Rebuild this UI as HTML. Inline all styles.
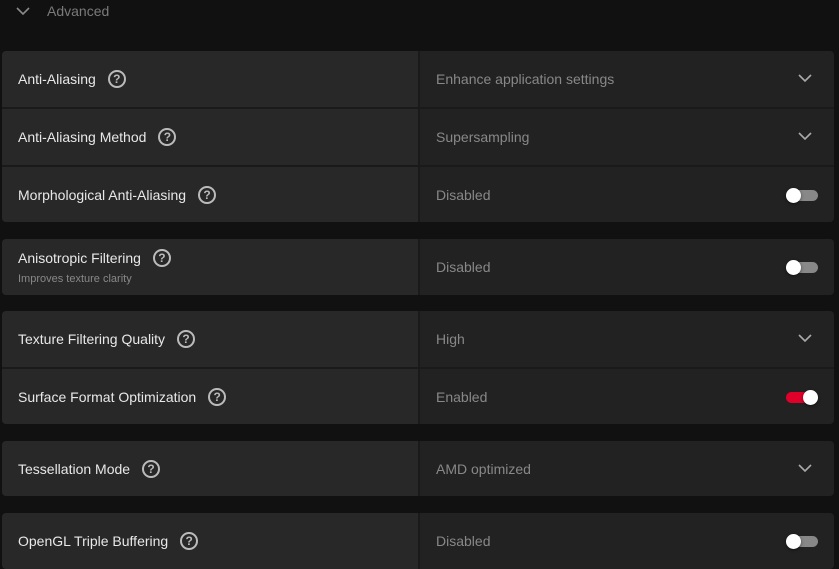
<!DOCTYPE html><html><head><style>
body{margin:0;width:839px;height:562px;background:#111;font-family:"Liberation Sans",sans-serif;overflow:hidden;position:relative}
.hdr{position:absolute;left:16px;top:3px;color:#7a7a7a;font-size:14px}
.hdr svg{position:absolute;left:0;top:3px}
.grp{position:absolute;left:2px;width:832px;border-radius:4px;overflow:hidden;background:#1a1a1a}
.row{position:relative;height:56px;margin-bottom:2px;display:flex}
.row:last-child{margin-bottom:0}
.l{width:416px;background:#282828;position:relative;margin-right:2px}
.r{flex:1;background:#222;position:relative}
.lab{position:absolute;left:16px;top:19px;color:#e8e8e8;font-size:14px;display:flex;align-items:center}
.lab.two{top:10px}
.sub{position:absolute;left:16px;top:34px;color:#888;font-size:11px}
.q{display:inline-block;width:14px;height:14px;border:2px solid #bbb;border-radius:50%;color:#bbb;font-size:12px;font-weight:bold;text-align:center;line-height:14px;margin-left:12px}
.val{position:absolute;left:16px;top:20px;color:#888;font-size:14px}
.chev{position:absolute;right:22px;top:22px}
.tg{position:absolute;right:16px;top:23px;width:32px;height:11px;border-radius:6px;background:#888}
.tg::after{content:"";position:absolute;left:0;top:-2px;width:15px;height:15px;border-radius:50%;background:#fff;box-shadow:0 1px 3px rgba(0,0,0,.5)}
.tg.on{background:#e0002a}.tg.on::after{left:17px}
</style></head><body>
<div class="hdr"><svg width="14" height="10"><path d="M1 2l6 6 6-6" stroke="#8a8a8a" stroke-width="1.6" fill="none"/></svg><span style="margin-left:31px">Advanced</span></div>
<div class="grp" style="top:51px">
<div class="row"><div class="l"><div class="lab">Anti-Aliasing<span class="q">?</span></div></div><div class="r"><div class="val">Enhance application settings</div><svg class="chev" width="14" height="10"><path d="M1 2l6 6 6-6" stroke="#aaa" stroke-width="1.6" fill="none"/></svg></div></div>
<div class="row"><div class="l"><div class="lab">Anti-Aliasing Method<span class="q">?</span></div></div><div class="r"><div class="val">Supersampling</div><svg class="chev" width="14" height="10"><path d="M1 2l6 6 6-6" stroke="#aaa" stroke-width="1.6" fill="none"/></svg></div></div>
<div class="row" style="height:55px"><div class="l"><div class="lab">Morphological Anti-Aliasing<span class="q">?</span></div></div><div class="r"><div class="val">Disabled</div><div class="tg"></div></div></div>
</div>
<div class="grp" style="top:239px">
<div class="row"><div class="l"><div class="lab two">Anisotropic Filtering<span class="q">?</span></div><div class="sub">Improves texture clarity</div></div><div class="r"><div class="val">Disabled</div><div class="tg"></div></div></div>
</div>
<div class="grp" style="top:311px">
<div class="row"><div class="l"><div class="lab">Texture Filtering Quality<span class="q">?</span></div></div><div class="r"><div class="val">High</div><svg class="chev" width="14" height="10"><path d="M1 2l6 6 6-6" stroke="#aaa" stroke-width="1.6" fill="none"/></svg></div></div>
<div class="row" style="height:55px"><div class="l"><div class="lab">Surface Format Optimization<span class="q">?</span></div></div><div class="r"><div class="val">Enabled</div><div class="tg on"></div></div></div>
</div>
<div class="grp" style="top:441px">
<div class="row" style="height:55px"><div class="l"><div class="lab">Tessellation Mode<span class="q">?</span></div></div><div class="r"><div class="val">AMD optimized</div><svg class="chev" width="14" height="10"><path d="M1 2l6 6 6-6" stroke="#aaa" stroke-width="1.6" fill="none"/></svg></div></div>
</div>
<div class="grp" style="top:513px">
<div class="row"><div class="l"><div class="lab">OpenGL Triple Buffering<span class="q">?</span></div></div><div class="r"><div class="val">Disabled</div><div class="tg"></div></div></div>
</div>
</body></html>
